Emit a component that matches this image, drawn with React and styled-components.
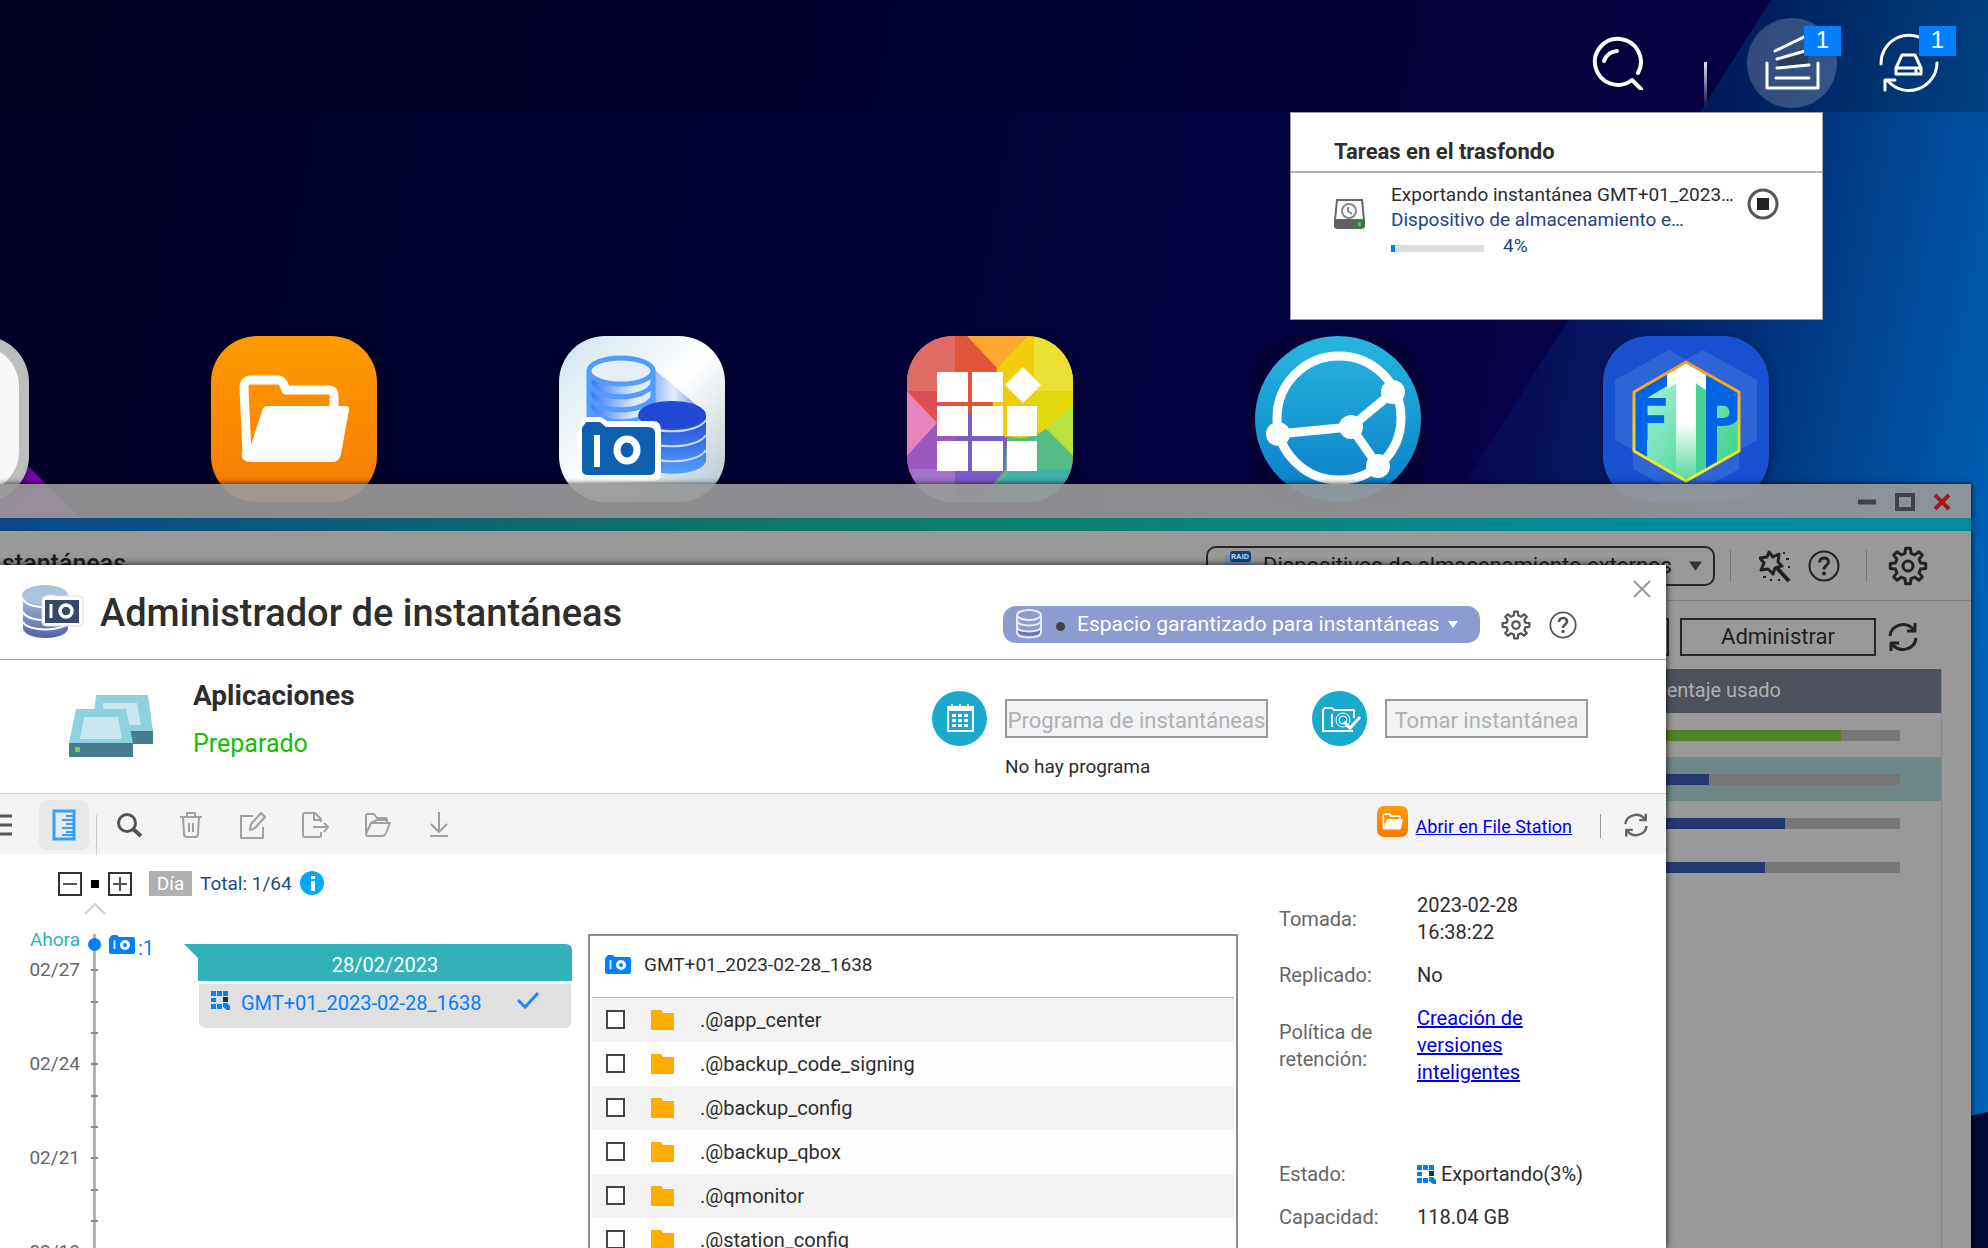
import React from 'react';
import styled, { createGlobalStyle } from 'styled-components';

const GlobalStyle = createGlobalStyle`
  * {
    box-sizing: border-box;
  }

  body {
    margin: 0;
    color: #2d2d2d;
    font-family: Roboto, 'Liberation Sans', sans-serif;
    font-size: 20px;
  }

  button,
  input,
  select {
    font-family: inherit;
  }

  svg {
    display: block;
    flex: none;
  }
`;

const Desktop = styled.div`
  position: relative;
  height: 100vh;
  overflow: hidden;
  background: linear-gradient(100deg, #000026 0%, #02023a 50%, #08004c 80%);
`;

const Wallpaper = styled.svg`
  position: absolute;
  width: 100%;
  height: 100%;
`;

/* top bar */

const TopBar = styled.header`
  position: relative;
  display: flex;
  align-items: center;
  justify-content: flex-end;
  height: 112px;
  padding: 18px 49px 4px 0;
  background: rgba(0, 0, 20, 0.2);
`;

const IconButton = styled.button`
  position: relative;
  display: flex;
  align-items: center;
  justify-content: center;
  flex: none;
  width: ${props => props.$size || 28}px;
  height: ${props => props.$size || 28}px;
  padding: 0;
  border: 0;
  border-radius: ${props => (props.$round ? '50%' : '8px')};
  background: ${props => props.$fill || 'none'};
  color: ${props => props.$color || '#555'};
`;

const BarDivider = styled.span`
  align-self: flex-end;
  width: 3px;
  height: 46px;
  margin: 0 40px 0 60px;
  background: linear-gradient(#e8e8f0, rgba(255, 255, 255, 0));
`;

const BarGap = styled.span`
  width: 42px;
`;

const Badge = styled.span`
  position: absolute;
  top: ${props => props.$top}px;
  right: ${props => props.$right}px;
  width: 37px;
  height: 30px;
  background: #007fff;
  color: #fff;
  font-family: 'Liberation Sans', sans-serif;
  font-size: 24px;
  line-height: 28px;
  text-align: center;
`;

/* background tasks */

const TaskMenu = styled.section`
  position: absolute;
  z-index: 3;
  top: 112px;
  right: 165px;
  width: 533px;
  height: 208px;
  border: 1px solid #a0a0a0;
  background: #fff;
`;

const TaskTitle = styled.h2`
  margin: 0;
  padding: 23px 43px 0;
  height: 60px;
  border-bottom: 2px solid #b4b4b4;
  font-size: 22px;
  font-weight: 700;
  line-height: 32px;
`;

const Task = styled.div`
  display: flex;
  align-items: flex-start;
  padding: 9px 43px 0 43px;
`;

const TaskText = styled.div`
  flex: 1;
  min-width: 0;
  margin: 0 0 0 26px;
  font-size: 19px;
  line-height: 25px;
`;

const TaskLine = styled.div`
  overflow: hidden;
  text-overflow: ellipsis;
  white-space: nowrap;
`;

const TaskTarget = styled(TaskLine)`
  width: 300px;
  color: #24427f;
`;

const TaskProgress = styled.div`
  display: flex;
  align-items: center;
  gap: 19px;
  padding-top: 1px;
  color: #24427f;
`;

const TaskTrack = styled.div`
  width: 93px;
  height: 7px;
  margin-top: 5px;
  background: #dcdcdc;
`;

const TaskFill = styled.div`
  height: 100%;
  background: #007fff;
`;

const TaskIcon = styled.span`
  margin-top: 17px;
`;

const StopButton = styled(IconButton)`
  margin-top: 6px;
`;

/* shortcuts */

const Shortcuts = styled.nav`
  position: relative;
  display: flex;
  gap: 182px;
  margin: 224px 0 0 -137px;
`;

const Shortcut = styled.a`
  flex: none;
  width: 166px;
  height: 166px;
  overflow: hidden;
  border-radius: 46px;
  box-shadow: 0 3px 10px rgba(0, 0, 0, 0.5);
`;

/* storage window */

const Window = styled.main`
  position: absolute;
  top: 484px;
  right: 17px;
  bottom: 0;
  left: 0;
  box-shadow: 0 0 6px rgba(0, 0, 0, 0.8);
`;

const WindowBar = styled.div`
  display: flex;
  align-items: center;
  justify-content: flex-end;
  gap: 18px;
  height: 34px;
  padding: 2px 20px 0 0;
  background: rgba(152, 152, 152, 0.92);
`;

const WindowStripe = styled.div`
  height: 13px;
  background: linear-gradient(90deg, #0c4688, #0f7765 38%, #0e8070 55%, #008c9c 85%);
`;

const WindowBody = styled.div`
  height: calc(100% - 47px);
  overflow: hidden;
  background: #999;
  color: #1e1e1e;
`;

const WindowTools = styled.div`
  display: flex;
  align-items: center;
  height: 70px;
  padding-right: 43px;
  border-bottom: 1px solid #808080;
`;

const WindowName = styled.h1`
  flex: 1;
  margin: 0;
  padding: 0 0 5px 2px;
  font-size: 25px;
  font-weight: 500;
`;

const DeviceSelect = styled.label`
  display: flex;
  align-items: center;
  width: 509px;
  height: 40px;
  padding: 0 11px 0 15px;
  border: 2px solid #262626;
  border-radius: 10px;

  select {
    flex: 1;
    padding: 0 0 0 11px;
    border: 0;
    background: none;
    color: #1e1e1e;
    font-size: 22px;
    appearance: none;
  }
`;

const Separator = styled.span`
  flex: none;
  width: 1px;
  height: ${props => props.$height}px;
  margin: ${props => props.$margin};
  background: ${props => props.$color};
`;

const WindowActions = styled.div`
  display: flex;
  align-items: center;
  justify-content: flex-end;
  gap: 11px;
  height: 68px;
  padding: 3px 52px 0 0;
`;

const ActionButton = styled.button`
  width: 196px;
  height: 38px;
  padding: 0;
  border: 2px solid #262626;
  background: none;
  color: #1e1e1e;
  font-size: 22px;
`;

const Volumes = styled.table`
  width: calc(100% - 29px);
  height: calc(100% - 138px);
  border-right: 1px solid #858585;
  border-collapse: collapse;
  table-layout: fixed;

  th {
    height: 44px;
    padding: 0 160px 2px 0;
    background: #4c515c;
    color: #b0b0b0;
    font-size: 20px;
    font-weight: 400;
    text-align: right;
  }

  td {
    height: 44px;
    padding: 1px 41px 0 0;
  }
`;

const VolumeRow = styled.tr`
  background: ${props => (props.$selected ? '#6f8887' : 'none')};
`;

const Usage = styled.div`
  width: 330px;
  height: 11px;
  margin-left: auto;
  background: #777;
`;

const UsageFill = styled.div`
  height: 100%;
  background: ${props => props.$color};
`;

/* snapshot manager */

const Dialog = styled.section`
  position: absolute;
  top: 81px;
  right: 305px;
  bottom: 0;
  left: 0;
  overflow: hidden;
  background: #fff;
`;

const DialogShadow = styled.div`
  position: absolute;
  top: 81px;
  right: 305px;
  bottom: 0;
  left: 0;
  box-shadow: 0 0 7px rgba(0, 0, 0, 0.9);
`;

const DialogHead = styled.header`
  display: flex;
  align-items: center;
  height: 95px;
  padding: 0 89px 0 22px;
  border-bottom: 1px solid #a6a6a6;
`;

const DialogTitle = styled.h2`
  flex: 1;
  margin: 0;
  padding: 2px 0 0 14px;
  font-size: 38px;
  font-weight: 500;
`;

const CloseButton = styled(IconButton)`
  position: absolute;
  top: 15px;
  right: 15px;
`;

const SpaceSelect = styled.label`
  display: flex;
  align-items: center;
  width: 477px;
  height: 37px;
  margin: 24px 22px 0 0;
  padding: 0 22px 0 13px;
  border-radius: 13px;
  background: #8c9cd0;

  select {
    flex: 1;
    padding: 0 0 0 12px;
    border: 0;
    background: none;
    color: #fff;
    font-size: 21px;
    appearance: none;
  }
`;

const SpaceDot = styled.span`
  width: 9px;
  height: 9px;
  margin: 4px 0 0 14px;
  border-radius: 50%;
  background: #444;
`;

const HeadButtons = styled.div`
  display: flex;
  gap: 19px;
  margin-top: 25px;
`;

const Summary = styled.div`
  display: flex;
  height: 134px;
  padding: 0 78px 0 69px;
  border-bottom: 1px solid #cfcfcf;
`;

const VolumeIcon = styled.span`
  margin-top: 35px;
`;

const SummaryText = styled.div`
  flex: 1;
  padding: 16px 0 0 40px;
`;

const VolumeName = styled.h3`
  margin: 0;
  font-size: 28px;
  font-weight: 700;
  line-height: 40px;
`;

const VolumeState = styled.p`
  margin: 8px 0 0;
  color: #14bf00;
  font-size: 25px;
  line-height: 40px;
`;

const SummaryAction = styled.div`
  display: grid;
  grid-template-columns: 55px auto;
  column-gap: 18px;
  align-items: center;
  align-content: start;
  margin: 31px 0 0 44px;

  p {
    grid-column: 2;
    margin: 9px 0 0;
    font-size: 19px;
    line-height: 24px;
  }
`;

const DisabledButton = styled.button`
  width: ${props => props.$width}px;
  height: 39px;
  padding: 4px 0 0;
  border: 2px solid #999;
  background: #f1f2f4;
  color: #b0b0b0;
  font-size: 22px;
  line-height: 31px;
  white-space: nowrap;
`;

const Toolbar = styled.div`
  display: flex;
  align-items: center;
  height: 60px;
  padding: 2px 17px 0 0;
  background: #f4f4f4;
`;

const ToolGroup = styled.div`
  display: flex;
  flex: 1;
  gap: 22px;
  margin-left: 12px;
`;

const FileStationLink = styled.a`
  display: flex;
  align-items: flex-end;
  gap: 8px;
  padding-bottom: 7px;
  color: #0000ee;
  font-size: 18px;
`;

const Content = styled.div`
  display: grid;
  grid-template-columns: 588px 1fr 428px;
  height: calc(100% - 289px);
`;

const Zoom = styled.div`
  display: flex;
  align-items: center;
  height: 25px;
  margin: 17px 0 0 58px;
`;

const ZoomButton = styled(IconButton)`
  width: 24px;
  height: 24px;
  border: 2px solid #333;
  border-radius: 0;
`;

const ZoomLevel = styled.span`
  width: 8px;
  height: 8px;
  margin: 0 9px;
  background: #000;
`;

const Unit = styled.span`
  width: 43px;
  height: 25px;
  margin: 0 8px 0 17px;
  background: #b0b0b0;
  color: #fff;
  font-size: 19px;
  line-height: 25px;
  text-align: center;
`;

const Total = styled.span`
  margin-right: 8px;
  color: #154d84;
  font-size: 19px;
`;

const ScrollUp = styled(IconButton)`
  width: 22px;
  height: 12px;
  margin: 7px 0 19px 84px;
`;

const Timeline = styled.div`
  display: flex;
  min-height: 320px;
`;

const Scale = styled.ol`
  width: 184px;
  margin: 0;
  padding: 0;
  background: linear-gradient(#b3b3b3, #b3b3b3) 93px 0 / 3px 100% no-repeat;
  list-style: none;
`;

const Mark = styled.li`
  display: grid;
  grid-template-columns: 80px 29px;
  align-items: center;
  justify-items: center;
  height: ${props => (props.$label ? 32 : 31)}px;
  color: #666;
  font-size: 19px;
  line-height: 24px;

  span {
    justify-self: end;
  }

  i {
    width: 7px;
    height: 2px;
    background: #8c8c8c;
  }
`;

const Now = styled.li`
  display: grid;
  grid-template-rows: 20px;
  grid-template-columns: 80px 29px 29px auto;
  align-items: center;
  height: 20px;
  color: #007fff;
  font-size: 20px;
  line-height: 20px;
`;

const NowLabel = styled.span`
  padding-bottom: 8px;
  color: #32b2b8;
  font-size: 19px;
  text-align: right;
`;

const NowCount = styled.span`
  padding-top: 8px;
`;

const NowDot = styled.span`
  justify-self: center;
  width: 13px;
  height: 13px;
  border-radius: 50%;
  background: #007fff;
`;

const Day = styled.div`
  width: 374px;
  margin: 10px 0 0 14px;
`;

const DayTitle = styled.h4`
  position: relative;
  margin: 0;
  height: 37px;
  border-radius: 0 6px 0 0;
  background: #32b2b8;
  color: #fff;
  font-size: 20px;
  font-weight: 400;
  line-height: 42px;
  text-align: center;

  &::before {
    content: '';
    position: absolute;
    top: 0;
    left: -14px;
    border-top: 14px solid #32b2b8;
    border-left: 14px solid transparent;
  }
`;

const Snapshot = styled.button`
  display: flex;
  align-items: flex-start;
  gap: 11px;
  width: 372px;
  height: 44px;
  margin: 3px 1px;
  padding: 7px 31px 0 12px;
  border: 0;
  border-radius: 0 0 6px 6px;
  background: #e0e0e0;
  color: #007fff;
  font-size: 20px;

  span {
    flex: 1;
    text-align: left;
  }
`;

const Files = styled.div`
  margin-top: 80px;
  padding: 0 2px;
  border: solid #8c8c8c;
  border-width: 2px 2px 0;
`;

const FilesTitle = styled.h4`
  display: flex;
  align-items: center;
  gap: 13px;
  height: 62px;
  margin: 0;
  padding: 0 0 4px 13px;
  border-bottom: 1px solid #b0b0b0;
  font-size: 19px;
  font-weight: 400;
`;

const FileRow = styled.label`
  display: flex;
  align-items: center;
  gap: 26px;
  height: 44px;
  padding: 0 0 1px 14px;
  background: ${props => (props.$odd ? '#f3f3f3' : '#fdfdfd')};

  input {
    width: 19px;
    height: 19px;
    margin: 0;
    border: 2px solid #444;
    background: #fff;
    appearance: none;
  }
`;

const Details = styled.dl`
  display: grid;
  grid-template-columns: 138px 180px;
  align-content: start;
  align-items: center;
  row-gap: 16px;
  margin: 0;
  padding: 38px 0 0 41px;
  line-height: 27px;

  dt {
    padding-right: 20px;
    color: #666;
  }

  dd {
    display: flex;
    align-items: center;
    gap: 5px;
    margin: 0;
  }

  a {
    width: 130px;
    color: #0000ee;
  }
`;

const DetailGap = styled.div`
  grid-column: 1 / 3;
  height: 43px;
`;

/* icons */

const gearPath = (teeth, outer, inner) => {
  const step = (Math.PI * 2) / teeth;
  const points = [];
  for (let i = 0; i < teeth; i += 1) {
    [[-0.3, inner], [-0.17, outer], [0.17, outer], [0.3, inner]].forEach(([offset, radius]) => {
      const angle = (i + offset) * step;
      points.push(`${(20 + radius * Math.sin(angle)).toFixed(1)} ${(20 - radius * Math.cos(angle)).toFixed(1)}`);
    });
  }
  return `M${points.join('L')}Z`;
};

const Glyph = ({ size, box = 24, width = 2, children }) => (
  <svg
    width={size}
    height={size}
    viewBox={`0 0 ${box} ${box}`}
    fill="none"
    stroke="currentColor"
    strokeWidth={width}
    strokeLinejoin="round"
    aria-hidden="true"
  >
    {children}
  </svg>
);

const GearIcon = ({ size }) => (
  <Glyph size={size} box={40} width={3}>
    <path d={gearPath(8, 18, 13)} />
    <circle cx="20" cy="20" r="5" />
  </Glyph>
);

const HelpIcon = ({ size }) => (
  <Glyph size={size} box={32} width={2}>
    <circle cx="16" cy="16" r="14.5" />
    <path d="M11.5 12.5c0-6 9-6 9-.5 0 3.5-4.5 3.5-4.5 7.5" strokeWidth="3" />
    <circle cx="16" cy="23.5" r="1" />
  </Glyph>
);

const RefreshIcon = ({ size }) => (
  <Glyph size={size} box={32} width={3}>
    <path d="M3 15C4 4 19-1 27 9M29 17c-1 11-16 16-24 6" />
    <path d="M28 2v8h-8M4 30v-8h8" />
  </Glyph>
);

const FolderArt = () => (
  <g>
    <path
      d="M36 118 33 52q0-8 7-8h27q4 0 6 5l2 5h43q5 0 5 5v12"
      fill="none"
      stroke="#fff"
      strokeWidth="9"
      strokeLinejoin="round"
    />
    <path d="M57 70h78q4 0 3 4l-8 44q-2 8-8 8H40q-11 0-9-10l5 2 1 0 14-43q1-5 6-5z" fill="#fff" />
  </g>
);

const FileStationIcon = ({ size, radius = 0 }) => (
  <svg width={size} height={size} viewBox="0 0 166 166" aria-hidden="true">
    <defs>
      <linearGradient id="orange" x2="0" y2="1">
        <stop stopColor="#ff9b00" />
        <stop offset="1" stopColor="#f67a00" />
      </linearGradient>
    </defs>
    <rect width="166" height="166" rx={radius} fill="url(#orange)" />
    <FolderArt />
  </svg>
);

const BlankAppIcon = () => (
  <svg width="166" height="166" aria-hidden="true">
    <rect width="166" height="166" fill="#bdbdbd" />
    <rect x="10" y="10" width="146" height="146" rx="40" fill="#f6f8fa" />
  </svg>
);

const StorageIcon = () => (
  <svg width="166" height="166" aria-hidden="true">
    <defs>
      <linearGradient id="ice" x2="1" y2="1">
        <stop stopColor="#cfe3ee" />
        <stop offset="0.5" stopColor="#fff" />
        <stop offset="1" stopColor="#b4c4ce" />
      </linearGradient>
      <linearGradient id="beam">
        <stop stopColor="#8fb4ff" />
        <stop offset="0.4" stopColor="#e6edfb" />
        <stop offset="1" stopColor="#4574ee" />
      </linearGradient>
      <linearGradient id="disk" x2="0" y2="1">
        <stop stopColor="#2347d3" />
        <stop offset="1" stopColor="#4fa2ff" />
      </linearGradient>
      <linearGradient id="tube">
        <stop stopColor="#2d72ff" />
        <stop offset="0.7" stopColor="#dfe9fb" />
      </linearGradient>
    </defs>
    <rect width="166" height="166" fill="url(#ice)" />
    <path d="M96 34 147 77 114 90 94 66z" fill="url(#beam)" />
    <path d="M30 36v60h64V36z" fill="url(#tube)" />
    <g fill="none" stroke="#4e9dff" strokeWidth="5">
      <path d="M30 36v60M94 36v40" />
      <ellipse cx="62" cy="35" rx="32" ry="13" fill="#e6edf3" />
      <path d="M30 48c8 17 56 17 64 0M30 61c8 17 56 17 64 0M30 73c8 17 56 17 64 0" />
    </g>
    <path d="M80 79v46c4 17 63 17 67 0V79z" fill="url(#disk)" />
    <ellipse cx="113" cy="79" rx="34" ry="14" fill="#2448d6" />
    <g fill="none" stroke="#c8dcf8" strokeWidth="2">
      <path d="M80 84c8 15 58 15 67 0M80 99c8 15 58 15 67 0M80 114c8 15 58 15 67 0" />
    </g>
    <path d="M20 90q2-9 9-9h13l6 4h46q8 0 8 9v42q0 9-8 9H26q-8 0-8-9z" fill="#fff" />
    <path d="M23 92l4-6h14l6 5h42q7 0 7 6v37q0 5-6 5H29q-6 0-6-5z" fill="#0f5fb0" />
    <path d="M38 99v32" stroke="#fff" strokeWidth="6" />
    <ellipse cx="68" cy="114" rx="10" ry="11" fill="none" stroke="#fff" strokeWidth="7" />
  </svg>
);

const AppCenterIcon = () => (
  <svg width="166" height="166" aria-hidden="true">
    <path d="M0 0h166v166H0z" fill="#e2553a" />
    <path d="M0 0h48v55H0z" fill="#df6d66" />
    <path d="M0 55h40v35z" fill="#dd4f57" />
    <path d="M60 0h60L90 32z" fill="#fda832" />
    <path d="M120 0h46v72l-26 24-40 12-16-26 6-50z" fill="#f0cc0a" />
    <path d="M127 0h39v55h-39z" fill="#ede034" />
    <path d="M127 55h39v15l-27 24-20-8z" fill="#e1d80e" />
    <path d="M166 70v50l-27-27z" fill="#b8e23f" />
    <path d="M139 93l27 27v46H72l28-66q20 6 39-7z" fill="#54bb84" />
    <path d="M98 110l8 23-34 33h94v-33h-60z" fill="#3fb0aa" />
    <path d="M0 55l30 32L0 120z" fill="#e783bf" />
    <path d="M30 87l30-12 40 27-2 33-28 31H0v-46z" fill="#9a58c0" />
    <path d="M48 76h14l38 28-4 31-26 31H48z" fill="#7a5cc8" />
    <path d="M0 133h48v33H0z" fill="#a274cc" />
    <path
      d="M30 36h31v30H30zM65 36h31v30H65zM30 70h31v30H30zM65 70h31v30H65zM100 70h30v30h-30zM30 105h31v30H30zM65 105h31v30H65zM100 105h30v30h-30zM116 31l18 18-18 18-18-18z"
      fill="#fff"
    />
  </svg>
);

const SyncIcon = () => (
  <svg width="166" height="166" aria-hidden="true">
    <defs>
      <linearGradient id="sea" x2="0" y2="1">
        <stop stopColor="#27b6de" />
        <stop offset="1" stopColor="#0a7dc8" />
      </linearGradient>
    </defs>
    <path d="M0 0h166v166H0z" fill="#030036" />
    <circle cx="83" cy="83" r="83" fill="url(#sea)" />
    <g fill="none" stroke="#fff" strokeWidth="9">
      <circle cx="84" cy="82" r="62" />
      <path d="M23 98 96 91 138 56M96 91l27 39" />
    </g>
    <g fill="#fff">
      <circle cx="138" cy="56" r="12" />
      <circle cx="23" cy="98" r="12" />
      <circle cx="96" cy="91" r="12" />
      <circle cx="123" cy="130" r="12" />
    </g>
  </svg>
);

const FtpIcon = () => (
  <svg width="166" height="166" aria-hidden="true">
    <defs>
      <linearGradient id="mint" x2="1" y2="1">
        <stop stopColor="#b8f4ea" />
        <stop offset="1" stopColor="#2fd07e" />
      </linearGradient>
      <linearGradient id="arrow" x2="0" y2="1">
        <stop offset="0.5" stopColor="#fff" />
        <stop offset="1" stopColor="#4fd69a" />
      </linearGradient>
      <linearGradient id="rim" x2="0" y2="1">
        <stop stopColor="#f99a18" />
        <stop offset="1" stopColor="#eef42e" />
      </linearGradient>
      <clipPath id="hexagon">
        <path d="M83 26 136 56v59L83 145 31 115V56z" />
      </clipPath>
    </defs>
    <path d="M0 0h166v166H0z" fill="#1751cf" />
    <path d="M66 14 119 44v60L66 134 12 104V44zM100 14l54 30v60l-54 30-54-30V44z" fill="#2f64d6" />
    <path d="M30 115l53 31 53-31v18l-53 29-53-29z" fill="#2f64d6" />
    <g clipPath="url(#hexagon)">
      <path d="M31 26h105v119H31z" fill="url(#mint)" />
      <path d="M31 56 64 37v13L44 62v64l-13-9zM103 37l33 19v12h-22v68l-11 6z" fill="#0064e6" />
      <g fill="#0064e6" fontFamily="Roboto, sans-serif" fontSize="60" fontWeight="900">
        <text x="31" y="104">F</text>
        <text x="100" y="104">P</text>
      </g>
      <path d="M93 48l10 6v84l-10 6z" fill="#43d492" />
      <path d="M64 37 83 26l20 11v17l-10-7v93l-10 6-10-6V47l-9 6z" fill="url(#arrow)" />
    </g>
    <path d="M83 26 136 56v59L83 145 31 115V56z" fill="none" stroke="url(#rim)" strokeWidth="3" strokeLinejoin="round" />
  </svg>
);

const CameraIcon = () => (
  <svg width="26" height="19" aria-hidden="true">
    <path d="M1 2l2-2h5l2 2h14q2 0 2 2v13q0 2-2 2H2q-2 0-2-2V4z" fill="#007fff" />
    <path d="M5.5 5v9" stroke="#cfe5ff" strokeWidth="2" />
    <circle cx="16" cy="10" r="3.5" fill="none" stroke="#fff" strokeWidth="3" />
  </svg>
);

const BusyIcon = () => (
  <svg width="19" height="19" aria-hidden="true">
    <path
      d="M0 0h5v5H0zM6 0h5v5H6zM12 0h5v5h-5zM0 7h5v4H0zM0 13h5v5H0zM6 13h5v5H6zM12 12h4l3 3v4h-3l-4-3z"
      fill="#007fff"
    />
    <path d="M12 6h5v5h-5z" fill="#13303f" />
  </svg>
);

const SnapshotManagerIcon = () => (
  <svg width="64" height="56" aria-hidden="true">
    <defs>
      <linearGradient id="stack" x2="0" y2="1">
        <stop stopColor="#a9bfdc" />
        <stop offset="1" stopColor="#5362a6" />
      </linearGradient>
    </defs>
    <path d="M1 11v34c3 12 42 12 45 0V11z" fill="url(#stack)" />
    <ellipse cx="23" cy="11" rx="23" ry="10" fill="#adc2dd" />
    <path d="M1 15c5 11 40 11 45 0M1 28c5 11 40 11 45 0M1 38c5 10 40 10 45 0" fill="none" stroke="#fff" strokeWidth="2" />
    <path d="M20 16q0-4 4-4l3-1h5l2 1h23q4 0 4 4v22q0 4-4 4H24q-4 0-4-4z" fill="#fff" stroke="#ddd" />
    <path d="M23 16h34v23H23z" fill="#3b4768" />
    <path d="M29 20v14" stroke="#fff" strokeWidth="3" />
    <circle cx="44" cy="27" r="6" fill="none" stroke="#fff" strokeWidth="3.5" />
  </svg>
);

const VolumesIcon = () => (
  <svg width="84" height="63" aria-hidden="true">
    <path d="M27 0h52l5 36H23z" fill="#8dd0df" />
    <path d="M34 8h34l4 22H35z" fill="#c9e7ee" />
    <path d="M50 36h34v13H50z" fill="#467b90" />
    <path d="M7 14h50l7 34H0z" fill="#8dd0df" />
    <path d="M15 22h34l4 22H11z" fill="#c9e7ee" />
    <path d="M0 48h64v14H0z" fill="#467b90" />
    <path d="M6 52h5v5H6z" fill="#86cc2c" />
  </svg>
);

const CalendarIcon = () => (
  <svg width="55" height="55" aria-hidden="true">
    <circle cx="27.5" cy="27.5" r="27.5" fill="#18a9cc" />
    <path d="M16 16h25v24H16z" fill="none" stroke="#fff" strokeWidth="2" />
    <path d="M15 16h27v4H15zM19 13h2v4h-2zM27 13h2v4h-2zM35 13h2v4h-2z" fill="#fff" />
    <path
      d="M20 23h4v3h-4zM26 23h4v3h-4zM32 23h4v3h-4zM20 28h4v3h-4zM26 28h4v3h-4zM32 28h4v3h-4zM20 33h4v3h-4zM26 33h4v3h-4zM32 33h4v3h-4z"
      fill="#fff"
    />
  </svg>
);

const TakeIcon = () => (
  <svg width="55" height="55" aria-hidden="true">
    <circle cx="27.5" cy="27.5" r="27.5" fill="#18a9cc" />
    <g fill="none" stroke="#fff" strokeWidth="2">
      <path d="M42 27V19H22l-2-2h-7l-2 2v21h30" />
      <path d="M20 23v13" />
      <circle cx="31" cy="29" r="7" strokeWidth="1" />
      <circle cx="31" cy="29" r="4" strokeWidth="1" />
      <path d="M32 31l6 6 10-11" strokeWidth="3" />
    </g>
  </svg>
);

const TaskDiskIcon = () => (
  <svg width="31" height="31" aria-hidden="true">
    <path d="M3 1h25l2 20H1z" fill="#fff" stroke="#666" strokeWidth="2" />
    <path d="M0 21h31v6q0 3-4 3H4q-4 0-4-3z" fill="#606060" />
    <circle cx="15" cy="12" r="7" fill="none" stroke="#888" strokeWidth="2" />
    <path d="M14 8v4l4 3" fill="none" stroke="#888" strokeWidth="2" />
    <path d="M24 23h3v4h-3z" fill="#24e02c" />
  </svg>
);

const DatabaseIcon = () => (
  <svg width="26" height="30" fill="none" stroke="#e9edf8" strokeWidth="2" aria-hidden="true">
    <path d="M1 17c3 7 21 7 24 0v5c-3 6-21 6-24 0z" fill="#5d74b4" stroke="none" />
    <ellipse cx="13" cy="6" rx="12" ry="5" />
    <path d="M1 6v18c2 6 22 6 24 0V6M1 12c2 6 22 6 24 0M1 18c2 6 22 6 24 0" />
  </svg>
);

const RaidIcon = () => (
  <svg width="29" height="34" aria-hidden="true">
    <path d="M2 6h25l1 24H0z" fill="#7d8ea2" />
    <rect x="7" y="2" width="21" height="11" rx="3" fill="#0b4489" />
    <text x="17" y="10" fill="#c8d4e0" fontFamily="Roboto, sans-serif" fontSize="8" fontWeight="700" textAnchor="middle">
      RAID
    </text>
  </svg>
);

const Caret = ({ size, color }) => (
  <svg width={size} height={size} viewBox="0 0 10 10" aria-hidden="true">
    <path d="M0 2h10L5 9z" fill={color} />
  </svg>
);

const tools = [
  {
    name: 'Buscar',
    color: '#555',
    art: (
      <g>
        <circle cx="11" cy="11" r="8.5" strokeWidth="3" />
        <path d="M17 17l8 7" strokeWidth="4" />
      </g>
    ),
  },
  { name: 'Eliminar', art: <path d="M2 5h22M9 5V1h8v4M5 5l1 17q0 3 3 3h8q3 0 3-3l1-17M11 11v9M15 11v9" /> },
  { name: 'Editar', art: <path d="M13 4H1v22h22V15M10 18l1-6L21 1l4 4-10 11z" /> },
  { name: 'Exportar', art: <path d="M19 10V7l-6-6H3q-2 0-2 2v20q0 2 2 2h14q2 0 2-2v-3M12 1v7h7M11 15h15M22 11l4 4-4 5" /> },
  { name: 'Abrir', art: <path d="M2 22V4q0-2 2-2h6l3 4h8q2 0 2 2v3M2 22l5-11h19l-4 10q-1 3-4 3H4q-2 0-2-2zM7 11l6-3h10" /> },
  { name: 'Descargar', art: <path d="M13 0v20M5 12l8 8 8-8M4 24h18" /> },
];

const marks = ['02/27', '', '', '02/24', '', '', '02/21', '', '', '02/18'];

const files = ['.@app_center', '.@backup_code_signing', '.@backup_config', '.@backup_qbox', '.@qmonitor', '.@station_config'];

const volumes = [
  { used: 82, color: '#4f8426' },
  { used: 42, color: '#263872', selected: true },
  { used: 65, color: '#263872' },
  { used: 59, color: '#263872' },
];

const shortcuts = [
  { name: 'Panel de control', icon: <BlankAppIcon /> },
  { name: 'File Station', icon: <FileStationIcon size={166} /> },
  { name: 'Almacenamiento', icon: <StorageIcon /> },
  { name: 'App Center', icon: <AppCenterIcon /> },
  { name: 'Syncthing', icon: <SyncIcon /> },
  { name: 'FTP', icon: <FtpIcon /> },
];

const Background = () => (
  <Wallpaper viewBox="0 0 1988 1248" preserveAspectRatio="none" aria-hidden="true">
    <defs>
      <linearGradient id="glow" gradientUnits="userSpaceOnUse" x1="1460" y1="500" x2="1988" y2="600">
        <stop stopColor="#0a0450" />
        <stop offset="0.45" stopColor="#002e75" />
        <stop offset="1" stopColor="#0062b4" />
      </linearGradient>
    </defs>
    <path d="M1771 0h217v1248H980z" fill="url(#glow)" />
    <path d="M1900 1130l88-18v136h-88z" fill="#000a34" />
    <path d="M0 438l110 110H0z" fill="#7a06ac" />
  </Wallpaper>
);

const TopIcons = () => (
  <TopBar>
    <IconButton $size={54} $color="#fff" aria-label="Buscar">
      <Glyph size={54} box={54} width={4}>
        <path d="M12 29q6-12 16-12v-3q-14 2-16 15z" fill="#000018" stroke="none" />
        <path d="M48 37A23 23 0 1 0 42 44l9 9" strokeLinecap="round" />
        <path d="M14 25q3-9 13-10" strokeLinecap="round" />
      </Glyph>
    </IconButton>
    <BarDivider />
    <IconButton $size={90} $round $fill="rgba(255, 255, 255, 0.2)" $color="#fff" aria-label="Tareas en el trasfondo">
      <Glyph size={56} box={56} width={3}>
        <path d="M13 26l31-9v13l-31 3z" fill="#2a3c5c" stroke="none" />
        <path d="M3 28v25h51V28M12 43h33M13 33l32-3M13 24l28-8M11 16l29-14" strokeLinecap="round" />
      </Glyph>
      <Badge $top={8} $right={-4}>1</Badge>
    </IconButton>
    <BarGap />
    <IconButton $size={60} $color="#fff" aria-label="Dispositivos externos">
      <Glyph size={60} box={60} width={3}>
        <path d="M2 31A28 28 0 0 1 44 6M58 30A28 28 0 0 1 9 48M6 57V47h10" strokeLinecap="round" />
        <path d="M23 22h13l6 13v6H17v-6zM17 35h25M37 36v4" />
      </Glyph>
      <Badge $top={-7} $right={-17}>1</Badge>
    </IconButton>
  </TopBar>
);

const Tasks = () => (
  <TaskMenu>
    <TaskTitle>Tareas en el trasfondo</TaskTitle>
    <Task>
      <TaskIcon>
        <TaskDiskIcon />
      </TaskIcon>
      <TaskText>
        <TaskLine>Exportando instantánea GMT+01_2023…</TaskLine>
        <TaskTarget>Dispositivo de almacenamiento e…</TaskTarget>
        <TaskProgress>
          <TaskTrack>
            <TaskFill style={{ width: '4%' }} />
          </TaskTrack>
          4%
        </TaskProgress>
      </TaskText>
      <StopButton $size={32} aria-label="Detener">
        <Glyph size={32} box={32} width={3}>
          <circle cx="16" cy="16" r="14" />
          <path d="M10 10h12v12H10z" fill="#222" stroke="none" />
        </Glyph>
      </StopButton>
    </Task>
  </TaskMenu>
);

const StorageWindow = ({ children }) => (
  <Window>
    <WindowBar>
      <IconButton $size={20} $color="#3f4347" aria-label="Minimizar">
        <Glyph size={20} box={20} width={5}>
          <path d="M1 10h18" />
        </Glyph>
      </IconButton>
      <IconButton $size={20} $color="#3f4347" aria-label="Maximizar">
        <Glyph size={20} box={20} width={4}>
          <path d="M2 3h16v14H2z" strokeLinejoin="miter" />
        </Glyph>
      </IconButton>
      <IconButton $size={18} $color="#a01c1c" aria-label="Cerrar">
        <Glyph size={18} box={18} width={4}>
          <path d="M2 2l14 14M16 2 2 16" />
        </Glyph>
      </IconButton>
    </WindowBar>
    <WindowStripe />
    <WindowBody>
      <WindowTools>
        <WindowName>stantáneas</WindowName>
        <DeviceSelect>
          <RaidIcon />
          <select aria-label="Dispositivo">
            <option>Dispositivos de almacenamiento externos</option>
          </select>
          <Caret size={13} color="#333" />
        </DeviceSelect>
        <Separator $height={32} $margin="0 28px 0 15px" $color="#77766f" />
        <IconButton $size={32} $color="#222" aria-label="Asistente">
          <Glyph size={32} box={32} width={2}>
            <path d="M10 2l4 5 6-3-1 8 4 4-7 2-2 6-5-5-7 1 3-7-4-5 7-1z" strokeWidth="3" />
            <path d="M17 17l13 14" strokeWidth="4" />
            <path d="M24 3h2M27 9h3M29 17h2M4 27h3M11 30h2M19 30h2" />
          </Glyph>
        </IconButton>
        <Separator $height={1} $margin="0 8px" $color="transparent" />
        <IconButton $size={32} $color="#222" aria-label="Ayuda">
          <HelpIcon size={32} />
        </IconButton>
        <Separator $height={32} $margin="0 21px 0 26px" $color="#77766f" />
        <IconButton $size={40} $color="#222" aria-label="Ajustes">
          <GearIcon size={40} />
        </IconButton>
      </WindowTools>
      <WindowActions>
        <ActionButton aria-label="Crear" />
        <ActionButton>Administrar</ActionButton>
        <IconButton $size={32} $color="#222" aria-label="Actualizar">
          <RefreshIcon size={32} />
        </IconButton>
      </WindowActions>
      <Volumes>
        <thead>
          <tr>
            <th>Porcentaje usado</th>
          </tr>
        </thead>
        <tbody>
          {volumes.map(volume => (
            <VolumeRow key={volume.used} $selected={volume.selected}>
              <td>
                <Usage>
                  <UsageFill $color={volume.color} style={{ width: `${volume.used}%` }} />
                </Usage>
              </td>
            </VolumeRow>
          ))}
          <tr>
            <td style={{ height: 'auto' }} />
          </tr>
        </tbody>
      </Volumes>
    </WindowBody>
    {children}
  </Window>
);

const SnapshotManager = () => (
  <Dialog>
    <DialogHead>
      <SnapshotManagerIcon />
      <DialogTitle>Administrador de instantáneas</DialogTitle>
      <SpaceSelect>
        <DatabaseIcon />
        <SpaceDot />
        <select aria-label="Espacio">
          <option>Espacio garantizado para instantáneas</option>
        </select>
        <Caret size={10} color="#fff" />
      </SpaceSelect>
      <HeadButtons>
        <IconButton aria-label="Ajustes">
          <GearIcon size={30} />
        </IconButton>
        <IconButton aria-label="Ayuda">
          <HelpIcon size={28} />
        </IconButton>
      </HeadButtons>
      <CloseButton $size={18} $color="#999" aria-label="Cerrar">
        <Glyph size={18} box={18}>
          <path d="M1 1l16 16M17 1 1 17" />
        </Glyph>
      </CloseButton>
    </DialogHead>
    <Summary>
      <VolumeIcon>
        <VolumesIcon />
      </VolumeIcon>
      <SummaryText>
        <VolumeName>Aplicaciones</VolumeName>
        <VolumeState>Preparado</VolumeState>
      </SummaryText>
      <SummaryAction>
        <CalendarIcon />
        <DisabledButton $width={263} disabled>
          Programa de instantáneas
        </DisabledButton>
        <p>No hay programa</p>
      </SummaryAction>
      <SummaryAction>
        <TakeIcon />
        <DisabledButton $width={203} disabled>
          Tomar instantánea
        </DisabledButton>
      </SummaryAction>
    </Summary>
    <Toolbar>
      <IconButton $size={12} aria-label="Lista">
        <Glyph size={24} box={24} width={3}>
          <path d="M0 3h18M0 12h18M0 21h18" />
        </Glyph>
      </IconButton>
      <Separator $height={1} $margin="0 26px 0 0" $color="transparent" />
      <IconButton $size={50} $fill="#e8e8e8" $color="#33a0ff" aria-label="Escala de tiempo">
        <Glyph size={32} box={32} width={3}>
          <path d="M6 2h20v28H6z" strokeLinejoin="miter" />
          <path d="M18 7h8M14 11h12M18 15h8M14 19h12M18 23h8M14 26h12" strokeWidth="2" />
        </Glyph>
      </IconButton>
      <Separator $height={40} $margin="20px 0 0 7px" $color="#ccc" />
      <ToolGroup>
        {tools.map(tool => (
          <IconButton key={tool.name} $size={40} $color={tool.color || '#a0a0a0'} aria-label={tool.name}>
            <Glyph size={27} box={27}>
              {tool.art}
            </Glyph>
          </IconButton>
        ))}
      </ToolGroup>
      <FileStationLink href="#file-station">
        <FileStationIcon size={31} radius={36} />
        Abrir en File Station
      </FileStationLink>
      <Separator $height={24} $margin="2px 22px 0 28px" $color="#999" />
      <IconButton $size={26} $color="#666" aria-label="Actualizar">
        <RefreshIcon size={26} />
      </IconButton>
    </Toolbar>
    <Content>
      <div>
        <Zoom>
          <ZoomButton aria-label="Alejar">
            <Glyph size={20} box={20}>
              <path d="M3 10h14" />
            </Glyph>
          </ZoomButton>
          <ZoomLevel />
          <ZoomButton aria-label="Acercar">
            <Glyph size={20} box={20}>
              <path d="M3 10h14M10 3v14" />
            </Glyph>
          </ZoomButton>
          <Unit>Día</Unit>
          <Total>Total: 1/64</Total>
          <svg width="25" height="25" role="img" aria-label="Información">
            <circle cx="12" cy="12" r="12" fill="#00a8ff" />
            <path d="M11 5h4v3h-4zM11 10h4v10h-4z" fill="#fff" />
          </svg>
        </Zoom>
        <ScrollUp $color="#ccc" aria-label="Subir">
          <svg width="22" height="12" fill="none" stroke="#d0d0d0" strokeWidth="2">
            <path d="M1 11 11 1l10 10" />
          </svg>
        </ScrollUp>
        <Timeline>
          <Scale>
            <Now>
              <NowLabel>Ahora</NowLabel>
              <NowDot />
              <CameraIcon />
              <NowCount>:1</NowCount>
            </Now>
            {marks.map((label, index) => (
              <Mark key={index} $label={label}>
                <span>{label}</span>
                <i />
              </Mark>
            ))}
          </Scale>
          <Day>
            <DayTitle>28/02/2023</DayTitle>
            <Snapshot>
              <BusyIcon />
              <span>GMT+01_2023-02-28_1638</span>
              <svg width="23" height="20" fill="none" stroke="#1a8cff" strokeWidth="3">
                <path d="M1 9l7 7L21 2" />
              </svg>
            </Snapshot>
          </Day>
        </Timeline>
      </div>
      <Files>
        <FilesTitle>
          <CameraIcon />
          GMT+01_2023-02-28_1638
        </FilesTitle>
        {files.map((file, index) => (
          <FileRow key={file} $odd={index % 2 === 0}>
            <input type="checkbox" />
            <svg width="23" height="20" aria-hidden="true">
              <path d="M0 0h10l2 3h11v17H0z" fill="#ffab00" />
            </svg>
            {file}
          </FileRow>
        ))}
      </Files>
      <Details>
        <dt>Tomada:</dt>
        <dd>
          2023-02-28
          <br />
          16:38:22
        </dd>
        <dt>Replicado:</dt>
        <dd>No</dd>
        <dt>Política de retención:</dt>
        <dd>
          <a href="#retencion">Creación de versiones inteligentes</a>
        </dd>
        <DetailGap />
        <dt>Estado:</dt>
        <dd>
          <BusyIcon />
          Exportando(3%)
        </dd>
        <dt>Capacidad:</dt>
        <dd>118.04 GB</dd>
      </Details>
    </Content>
  </Dialog>
);

const App = () => (
  <>
    <GlobalStyle />
    <Desktop>
      <Background />
      <TopIcons />
      <Tasks />
      <Shortcuts>
        {shortcuts.map(shortcut => (
          <Shortcut key={shortcut.name} href="#app" aria-label={shortcut.name}>
            {shortcut.icon}
          </Shortcut>
        ))}
      </Shortcuts>
      <StorageWindow>
        <DialogShadow />
        <SnapshotManager />
      </StorageWindow>
    </Desktop>
  </>
);

export default App;
